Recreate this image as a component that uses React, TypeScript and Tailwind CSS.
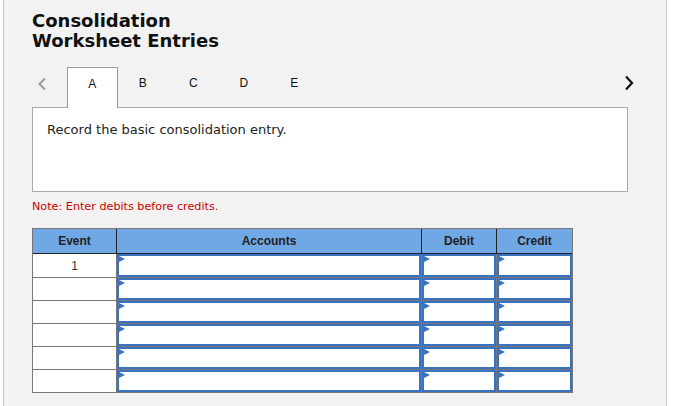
import React from "react";

const verdana = "font-['DejaVu_Sans',Verdana,sans-serif]";
const arial = "font-['Liberation_Sans',Arial,sans-serif]";

function InputCell({ w, last }: { w?: string; last?: boolean }) {
  return (
    <div className={`${w ?? "flex-1"} h-full ${last ? "" : "border-r border-[#777]"} bg-white`}>
      <div className="relative h-full border-2 border-[#3a72c2] bg-white">
        <div className="absolute left-0 top-0 h-0 w-0 border-y-[3px] border-y-transparent border-l-[6px] border-l-[#3a72c2]" />
      </div>
    </div>
  );
}

export default function App() {
  const tabs = ["A", "B", "C", "D", "E"];
  const rows = ["1", "", "", "", "", ""];
  return (
    <div className="h-[406px] w-[693px] bg-white">
      <div className="ml-[3px] h-[406px] w-[664px] border-x border-[#c8c8c8] bg-[#f2f2f2] pl-[28px] pt-[11px]">
        <h1 className={`${verdana} text-[18px] font-bold leading-[20px] text-[#111]`}>
          Consolidation
          <br />
          Worksheet Entries
        </h1>

        {/* tabs row */}
        <div className="relative z-10 mt-[16px] -mb-px flex h-[41px] w-[602px] items-start">
          <svg width="10" height="14" viewBox="0 0 10 14" className="ml-[5px] mt-[10px]">
            <path d="M8 1.5 L2.5 7 L8 12.5" fill="none" stroke="#9a9a9a" strokeWidth="2" />
          </svg>
          <div className="ml-[20px] flex">
            {tabs.map((t, i) => (
              <div
                key={t}
                className={`${arial} h-[41px] w-[50.5px] pt-[9px] text-center text-[12px] leading-[14px] text-[#111] ${
                  i === 0 ? "border-x border-t border-[#999] bg-white" : ""
                }`}
              >
                {t}
              </div>
            ))}
          </div>
          <svg width="10" height="16" viewBox="0 0 10 16" className="ml-auto mt-[8px]">
            <path d="M2 1.5 L8 8 L2 14.5" fill="none" stroke="#111" strokeWidth="2.2" />
          </svg>
        </div>

        {/* question box */}
        <div className="h-[85px] w-[596px] border border-[#aaa] bg-white pl-[14px] pt-[14px]">
          <p className={`${verdana} text-[13px] leading-[16px] text-[#222]`}>
            Record the basic consolidation entry.
          </p>
        </div>

        <p className={`${verdana} mt-[8px] text-[11.2px] leading-[14px] text-[#cc0000]`}>
          Note: Enter debits before credits.
        </p>

        {/* table */}
        <div className={`${arial} mt-[14px] w-[541px] border border-[#777] text-[12px]`}>
          <div className="flex h-[25px] items-center border-b border-[#222] bg-[#70a8e6] font-bold text-[#222]">
            <div className="flex h-full w-[84px] items-center justify-center border-r border-[#222]">Event</div>
            <div className="flex h-full w-[305px] items-center justify-center border-r border-[#222]">Accounts</div>
            <div className="flex h-full w-[75px] items-center justify-center border-r border-[#222]">Debit</div>
            <div className="flex h-full flex-1 items-center justify-center">Credit</div>
          </div>
          {rows.map((r, i) => (
            <div
              key={i}
              className={`flex h-[23px] ${i > 0 ? "border-t border-[#777]" : ""}`}
            >
              <div className="flex h-full w-[84px] items-center justify-center border-r border-[#777] bg-white text-[#333]">
                {r}
              </div>
              <InputCell w="w-[305px]" />
              <InputCell w="w-[75px]" />
              <InputCell last />
            </div>
          ))}
        </div>
      </div>
    </div>
  );
}
